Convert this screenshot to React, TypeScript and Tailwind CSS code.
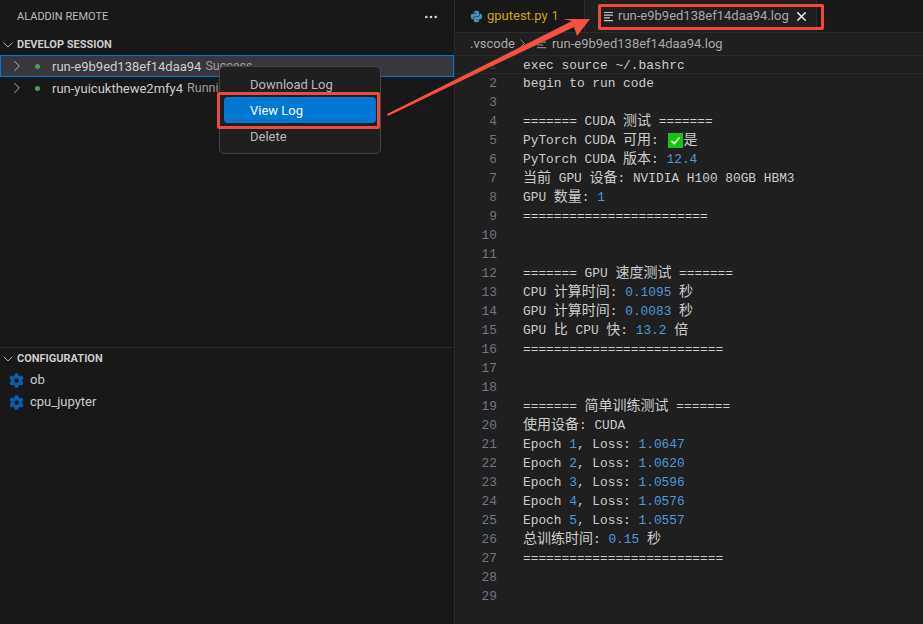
import React from "react";
import { FaPython, FaCog } from "react-icons/fa";
import { ChevronRight, ChevronDown, Ellipsis, X } from "lucide-react";

const CJK = /([\u4e00-\u9fff]+)/;

function Txt({ s }: { s: string }) {
  return (
    <>
      {s.split(CJK).map((p, i) =>
        CJK.test(p) ? (
          <span key={i} className="text-[14px] leading-none font-['Noto_Sans_CJK_SC',sans-serif]">
            {p}
          </span>
        ) : (
          <span key={i}>{p}</span>
        )
      )}
    </>
  );
}

const N = ({ children }: { children: React.ReactNode }) => <span className="text-[#4f98d8]">{children}</span>;

const Check = () => (
  <span className="inline-flex w-[15px] h-[15px] ml-[2px] bg-[#16c60c] items-center justify-center align-[-2px]">
    <svg width="11" height="11" viewBox="0 0 11 11">
      <path d="M1.5 6 L4.3 8.6 L9.5 2.6" fill="none" stroke="#fff" strokeWidth="1.6" />
    </svg>
  </span>
);

const lines: React.ReactNode[] = [
  <Txt s="exec source ~/.bashrc" />,
  <Txt s="begin to run code" />,
  "",
  <Txt s="======= CUDA 测试 =======" />,
  <>
    <Txt s="PyTorch CUDA 可用: " />
    <Check />
    <Txt s="是" />
  </>,
  <>
    <Txt s="PyTorch CUDA 版本: " />
    <N>12.4</N>
  </>,
  <Txt s="当前 GPU 设备: NVIDIA H100 80GB HBM3" />,
  <>
    <Txt s="GPU 数量: " />
    <N>1</N>
  </>,
  "========================",
  "",
  "",
  <Txt s="======= GPU 速度测试 =======" />,
  <>
    <Txt s="CPU 计算时间: " />
    <N>0.1095</N>
    <Txt s=" 秒" />
  </>,
  <>
    <Txt s="GPU 计算时间: " />
    <N>0.0083</N>
    <Txt s=" 秒" />
  </>,
  <>
    <Txt s="GPU 比 CPU 快: " />
    <N>13.2</N>
    <Txt s=" 倍" />
  </>,
  "==========================",
  "",
  "",
  <Txt s="======= 简单训练测试 =======" />,
  <Txt s="使用设备: CUDA" />,
  ...["1.0647", "1.0620", "1.0596", "1.0576", "1.0557"].map((v, i) => (
    <>
      Epoch <N>{i + 1}</N>, Loss: <N>{v}</N>
    </>
  )),
  <>
    <Txt s="总训练时间: " />
    <N>0.15</N>
    <Txt s=" 秒" />
  </>,
  "==========================",
  "",
  "",
];

const LogIcon = ({ className }: { className?: string }) => (
  <svg width="11" height="11" viewBox="0 0 11 11" className={className}>
    <path d="M1 1.5h9M1 4.2h9M1 6.9h6M1 9.6h9" stroke="#c5c5c5" strokeWidth="1.2" fill="none" />
  </svg>
);

function Row({ name, status, active }: { name: string; status: string; active?: boolean }) {
  return (
    <div
      className={
        active
          ? "h-[22px] flex items-center border border-[#0078d4] bg-[#37373d] text-[13px] text-[#cccccc]"
          : "h-[22px] flex items-center border border-transparent text-[13px] text-[#cccccc]"
      }
    >
      <ChevronRight size={18} strokeWidth={1.2} className="ml-[7px] text-[#c5c5c5]" />
      <span className="ml-[9px] w-[5px] h-[5px] rounded-full bg-[#4d9a5f]" />
      <span className="ml-[12px] pt-[1px]">{name}</span>
      <span className="ml-[4px] pt-[1px] text-[#9d9d9d] text-[12.5px]">{status}</span>
    </div>
  );
}

function Config({ name }: { name: string }) {
  return (
    <div className="h-[22px] flex items-center text-[13px] text-[#cccccc]">
      <FaCog size={15} className="ml-[9px] text-[#0e5ca8]" />
      <span className="ml-[6px]">{name}</span>
    </div>
  );
}

function Section({ title }: { title: string }) {
  return (
    <div className="h-[21px] pt-[1px] flex items-center text-[11px] font-bold text-[#cccccc]">
      <ChevronDown size={16} strokeWidth={1.3} className="text-[#c5c5c5] mr-[1px]" />
      {title}
    </div>
  );
}

export default function App() {
  return (
    <div className="relative w-[923px] h-[624px] flex overflow-hidden bg-[#181818] font-['Roboto','Liberation_Sans',sans-serif]">
      {/* Sidebar */}
      <aside className="w-[455px] h-full flex flex-col border-r border-[#2b2b2b] bg-[#181818]">
        <div className="h-[34px] flex items-center justify-between pl-[17px] pr-[15px] text-[11px] text-[#bbbbbb]">
          <span>ALADDIN REMOTE</span>
          <Ellipsis size={16} className="text-[#d0d0d0]" />
        </div>
        <Section title="DEVELOP SESSION" />
        <Row name="run-e9b9ed138ef14daa94" status="Success" active />
        <Row name="run-yuicukthewe2mfy4" status="Running" />
        <div className="h-[248px]" />
        <div className="border-t border-[#2b2b2b]">
          <Section title="CONFIGURATION" />
          <Config name="ob" />
          <Config name="cpu_jupyter" />
        </div>
      </aside>

      {/* Editor */}
      <main className="flex-1 flex flex-col min-w-0 bg-[#1f1f1f]">
        <div className="h-[33px] flex bg-[#181818] border-b border-[#2b2b2b] text-[13px]">
          <div className="w-[130px] flex items-center pl-[15px] border-r border-[#2b2b2b]">
            <FaPython size={13} className="text-[#4b8fb5]" />
            <span className="ml-[4px] text-[#cca700] whitespace-nowrap">gputest.py</span>
            <span className="ml-[4px] text-[#cca700] text-[12px]">1</span>
          </div>
          <div className="w-[232px] flex items-center pl-[18px] bg-[#1f1f1f] border-r border-[#2b2b2b] text-[#a8a8a8]">
            <LogIcon className="shrink-0" />
            <span className="ml-[4px] whitespace-nowrap">run-e9b9ed138ef14daa94.log</span>
            <X size={15} strokeWidth={2.2} className="ml-[5px] shrink-0 text-[#f0f0f0]" />
          </div>
        </div>
        <div className="h-[21.5px] flex items-center pl-[15px] text-[13px] text-[#a8a8a8]">
          <span>.vscode</span>
          <ChevronRight size={15} strokeWidth={1.3} className="text-[#a8a8a8]" />
          <LogIcon className="ml-[6px] opacity-60" />
          <span className="ml-[5px] whitespace-nowrap">run-e9b9ed138ef14daa94.log</span>
        </div>
        <div className="flex-1 font-['Liberation_Mono',monospace] text-[12.84px] text-[#cccccc]">
          {lines.map((l, i) => (
            <div
              key={i}
              className={
                i === 0
                  ? "h-[19.04px] leading-[19px] flex border-y border-[#282828]"
                  : "h-[19.04px] leading-[19px] flex"
              }
            >
              <span className={i === 0 ? "w-[42px] shrink-0 text-right text-[#3c3c3c]" : "w-[42px] shrink-0 text-right text-[#6e7681]"}>
                {i + 1}
              </span>
              <span className="ml-[26px] whitespace-pre">{l}</span>
            </div>
          ))}
        </div>
      </main>

      {/* Context menu */}
      <div className="absolute left-[219px] top-[66px] w-[162px] h-[88px] rounded-[5px] border border-[#454545] bg-[#1f1f1f] text-[13px] text-[#b8b8b8] px-[4px] py-[4px] flex flex-col">
        <div className="h-[26px] shrink-0 flex items-center pl-[26px] pt-[2px]">Download Log</div>
        <div className="h-[26px] shrink-0 flex items-center pl-[26px] pt-[2px] rounded-[4px] bg-[#0078d4] text-white">View Log</div>
        <div className="h-[26px] shrink-0 flex items-center pl-[26px] pt-[2px]">Delete</div>
      </div>

      {/* Annotations */}
      <div className="absolute left-[217px] top-[92px] w-[163px] h-[37px] border-[3px] border-[#f04a3e] rounded-[2px]" />
      <div className="absolute left-[598px] top-[4px] w-[226px] h-[26px] border-[3px] border-[#f04a3e] rounded-[2px]" />
      <svg className="absolute left-0 top-0 pointer-events-none" width="923" height="624">
        <polygon points="387,114 572,21 563,19 590,19 577,36 574,27 388,116" fill="#f4523f" />
      </svg>
    </div>
  );
}
